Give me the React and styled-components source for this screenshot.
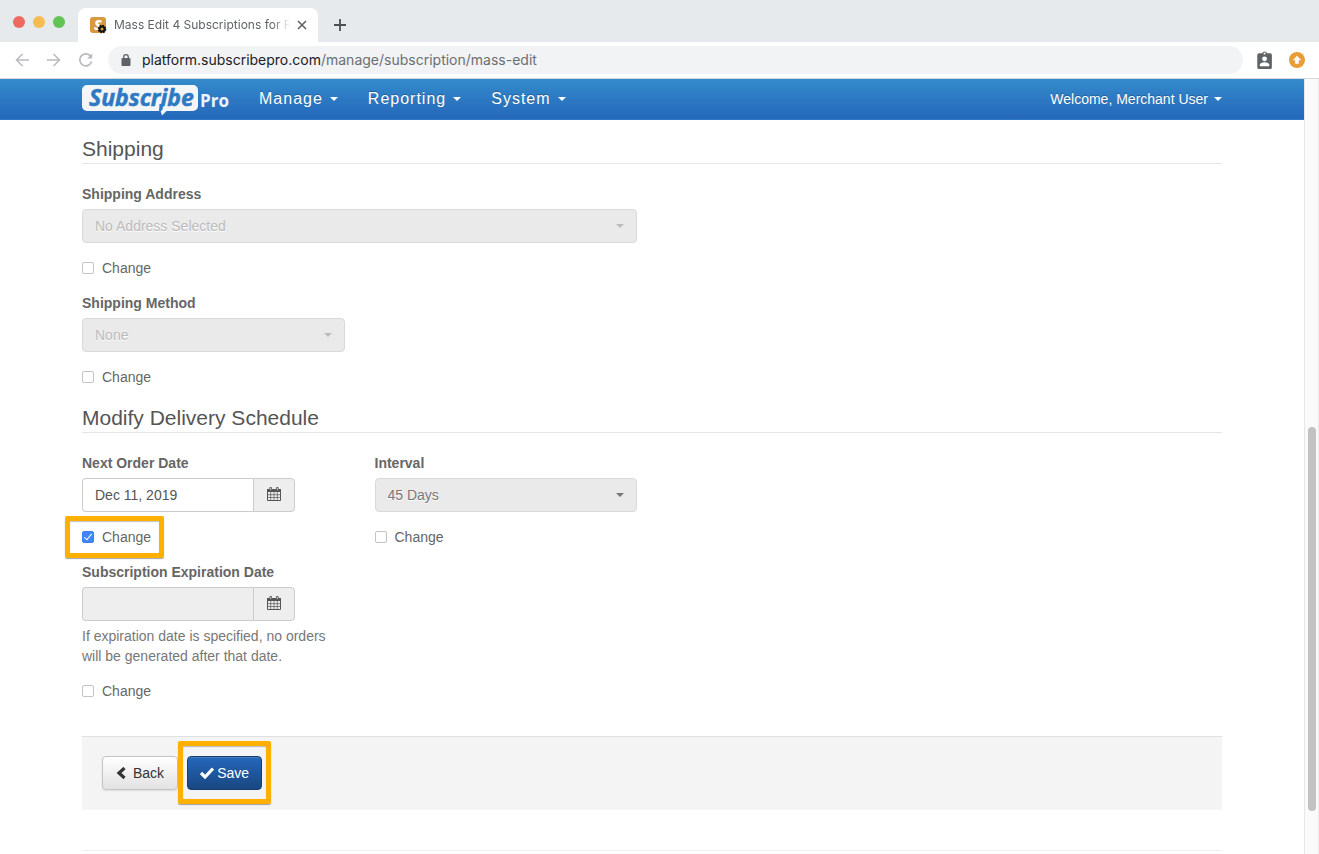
import React, { useState } from 'react';
import styled, { createGlobalStyle, css } from 'styled-components';

const GlobalStyle = createGlobalStyle`
  *, *::before, *::after {
    box-sizing: border-box;
  }

  body {
    margin: 0;
    background: #fff;
    color: #555;
    font: 14px/20px "Liberation Sans", Arial, sans-serif;
  }

  button, input, select {
    font: inherit;
    color: inherit;
  }
`;

function BrowserBar() {
  return (
    <header>
      <TabStrip>
        <Lights>
          <Light color="#ee6a5f" />
          <Light color="#f5bd4f" />
          <Light color="#61c454" />
        </Lights>
        <Tab>
          <Favicon />
          <TabTitle>Mass Edit 4 Subscriptions for R</TabTitle>
          <IconButton aria-label="Close tab" $size={10}>
            <svg width="10" height="10" viewBox="0 0 10 10" stroke="#5f6368" strokeWidth="1.6">
              <path d="M1 1l8 8M9 1l-8 8" />
            </svg>
          </IconButton>
        </Tab>
        <IconButton aria-label="New tab" $size={12}>
          <svg width="12" height="12" viewBox="0 0 12 12" stroke="#4d5156" strokeWidth="1.8">
            <path d="M6 0v12M0 6h12" />
          </svg>
        </IconButton>
      </TabStrip>
      <Toolbar>
        <NavIcons>
          <IconButton aria-label="Back" $size={14}>
            <svg width="14" height="14" viewBox="0 0 14 14" fill="none" stroke="#b9bbbe" strokeWidth="1.6">
              <path d="M14 7H1.5M7.5 1L1.5 7l6 6" />
            </svg>
          </IconButton>
          <IconButton aria-label="Forward" $size={14}>
            <svg width="14" height="14" viewBox="0 0 14 14" fill="none" stroke="#b9bbbe" strokeWidth="1.6">
              <path d="M0 7h12.5M6.5 1l6 6-6 6" />
            </svg>
          </IconButton>
          <IconButton aria-label="Reload" $size={14}>
            <svg width="14" height="14" viewBox="0 0 14 14" fill="none" stroke="#b9bbbe" strokeWidth="1.7">
              <path d="M12.6 8.6A6 6 0 1 1 11.4 2.9L12.4 4" />
              <path d="M13.2 0.4v5.2H8z" fill="#b9bbbe" stroke="none" />
            </svg>
          </IconButton>
        </NavIcons>
        <Address>
          <svg width="10" height="12" viewBox="0 0 10 12">
            <rect x="0.5" y="4" width="9" height="8" rx="1" fill="#5f6368" />
            <path d="M2.7 4.5V3a2.3 2.3 0 0 1 4.6 0v1.5" fill="none" stroke="#5f6368" strokeWidth="1.3" />
          </svg>
          <span>platform.subscribepro.com<Path>/manage/subscription/mass-edit</Path></span>
        </Address>
        <IconButton aria-label="Profile extension" $size={18}>
          <svg width="18" height="18" viewBox="0 0 19 19">
            <path d="M2 2.5h3.4a2.7 2.7 0 0 1 5.2 0H14a1.7 1.7 0 0 1 1.7 1.7v13A1.7 1.7 0 0 1 14 19H2A1.7 1.7 0 0 1 .3 17.2v-13A1.7 1.7 0 0 1 2 2.500z" fill="#5f6368" />
            <circle cx="8" cy="2.600" r="1.100" fill="#fff" />
            <circle cx="8" cy="8.300" r="2.600" fill="#fff" />
            <path d="M3 16v-1.300c0-1.800 3-2.700 5-2.700s5 .9 5 2.700V16z" fill="#fff" />
          </svg>
        </IconButton>
        <IconButton aria-label="Update" $size={16}>
          <svg width="16" height="16" viewBox="0 0 16 16">
            <circle cx="8" cy="8" r="8" fill="#e99d36" />
            <path d="M8 3.700l4.300 4.600H9.800v3.500H6.200V8.300H3.700z" fill="#fff" />
          </svg>
        </IconButton>
      </Toolbar>
    </header>
  );
}

function Favicon() {
  return (
    <svg width="17" height="17" viewBox="0 0 17 17" overflow="visible">
      <rect width="16" height="16" rx="3" fill="#d9993f" />
      <text x="4" y="13" fontFamily="Open Sans" fontWeight="800" fontStyle="italic" fontSize="14" fill="#fff">S</text>
      <circle cx="12" cy="12" r="2.500" fill="none" stroke="#111" strokeWidth="2" />
      <circle cx="12" cy="12" r="3.700" fill="none" stroke="#111" strokeWidth="1.300" strokeDasharray="1.600 1.306" />
    </svg>
  );
}

function Logo() {
  return (
    <svg width="147" height="32" viewBox="0 0 147 32" overflow="visible" role="img" aria-label="Subscribe Pro">
      <path d="M5 2h106a5 5 0 0 1 5 5v16a5 5 0 0 1-5 5H84.500l-4.500 4.500-1.500-4.500H5a5 5 0 0 1-5-5V7a5 5 0 0 1 5-5z" fill="#f4f5f7" />
      <text x="7" y="23" fontFamily="Open Sans" fontWeight="700" fontStyle="italic" fontSize="23" fill="#2f79c4" stroke="#2f79c4" strokeWidth=".5">Subscribe</text>
      <path d="M77.500 21h4.200l-1.200 5.500-3.500 3.500 0-2z" fill="#2f79c4" />
      <text x="118" y="24" fontFamily="Open Sans" fontWeight="700" fontSize="17" fill="#edf3fa">Pro</text>
    </svg>
  );
}

function SelectField({ id, label, value, span, muted }) {
  return (
    <Field $span={span}>
      <Label htmlFor={id}>{label}</Label>
      <SelectBox $muted={muted}>
        <select id={id} disabled>
          <option>{value}</option>
        </select>
        <Caret />
      </SelectBox>
      <ChangeBox name={id} />
    </Field>
  );
}

function DateField({ id, label, value, help, checked, highlighted }) {
  const [enabled, setEnabled] = useState(Boolean(checked));

  return (
    <Field>
      <Label htmlFor={id}>{label}</Label>
      <DateGroup>
        <input id={id} type="text" defaultValue={value} disabled={!enabled} />
        <button type="button" aria-label={`Pick ${label}`}>
          <CalendarIcon />
        </button>
      </DateGroup>
      {help && <Help>{help}</Help>}
      <ChangeBox
        name={id}
        checked={enabled}
        onChange={() => {setEnabled(!enabled)}}
        highlighted={highlighted}
      />
    </Field>
  );
}

function ChangeBox({ name, highlighted, ...rest }) {
  return (
    <CheckLabel>
      <input type="checkbox" name={`${name}-change`} {...rest} />
      Change
      {highlighted && <Highlight $y={11} $x={17} $right={13} />}
    </CheckLabel>
  );
}

function CalendarIcon() {
  return (
    <svg width="14" height="14" viewBox="0 0 14 14" fill="none" stroke="#555">
      <path d="M.5 4.500v9h13v-9" />
      <path d="M0 2h14v3H0z" fill="#555" stroke="none" />
      <path d="M3.700 5v8M7 5v8M10.300 5v8M1 7.700h12M1 10.500h12" strokeWidth=".7" />
      <path d="M3.700 1.300v1.700M10.300 1.300v1.700" strokeWidth="2.600" strokeLinecap="round" />
      <path d="M3.700 1v2.200M10.300 1v2.200" stroke="#ddd" strokeWidth=".9" />
    </svg>
  );
}

function App() {
  return (
    <Window>
      <GlobalStyle />
      <BrowserBar />
      <Viewport>
        <Page>
          <Navbar>
            <Container as="nav">
              <Logo />
              <Menu>
                <MenuLink href="#manage">Manage<Caret /></MenuLink>
                <MenuLink href="#reporting">Reporting<Caret /></MenuLink>
                <MenuLink href="#system">System<Caret /></MenuLink>
              </Menu>
              <UserLink href="#user">Welcome, Merchant User<Caret /></UserLink>
            </Container>
          </Navbar>
          <Content>
            <Heading>Shipping</Heading>
            <Row>
              <SelectField id="address" label="Shipping Address" value="No Address Selected" span={2} muted />
            </Row>
            <Row>
              <SelectField id="method" label="Shipping Method" value="None" muted />
            </Row>
            <Heading>Modify Delivery Schedule</Heading>
            <Row>
              <DateField id="next-order" label="Next Order Date" value="Dec 11, 2019" checked highlighted />
              <SelectField id="interval" label="Interval" value="45 Days" />
            </Row>
            <Row>
              <DateField
                id="expiration"
                label="Subscription Expiration Date"
                help="If expiration date is specified, no orders will be generated after that date."
              />
            </Row>
            <Actions>
              <Button type="button">
                <svg width="10" height="12" viewBox="0 0 10 12" fill="none" stroke="#333" strokeWidth="3.200">
                  <path d="M8.500 1L3 6l5.500 5" />
                </svg>
                Back
              </Button>
              <SaveSlot>
                <Button type="submit" $primary>
                  <svg width="14" height="12" viewBox="0 0 14 12" fill="none" stroke="#fff" strokeWidth="3.200">
                    <path d="M1 6l4 4L13 1.500" />
                  </svg>
                  Save
                </Button>
                <Highlight $y={15} $bottom={14} $x={9} $right={9} />
              </SaveSlot>
            </Actions>
            <Divider />
          </Content>
        </Page>
        <Scrollbar>
          <Thumb />
        </Scrollbar>
      </Viewport>
    </Window>
  );
}

const Window = styled.div`
  display: flex;
  flex-direction: column;
  min-height: 100vh;
`;

const TabStrip = styled.div`
  display: flex;
  align-items: center;
  height: 42px;
  padding: 8px 15px 0 12px;
  background: #e7eaed;
`;

const Lights = styled.div`
  display: flex;
  gap: 8px;
  width: 66px;
  padding: 0 0 7px 1px;
`;

const Light = styled.span`
  width: 12px;
  height: 12px;
  border-radius: 50%;
  background: ${props => props.color};
`;

const Tab = styled.div`
  display: flex;
  align-items: center;
  gap: 7px;
  width: 240px;
  height: 34px;
  padding: 0 11px 0 12px;
  margin-right: 16px;
  border-radius: 8px 8px 0 0;
  background: #fff;
`;

const TabTitle = styled.span`
  flex: 1;
  overflow: hidden;
  white-space: nowrap;
  font: 12px/20px Inter, sans-serif;
  color: #5f6368;
  mask-image: linear-gradient(to right, #000 90%, transparent);
`;

const IconButton = styled.button`
  display: grid;
  place-items: center;
  flex: none;
  width: ${props => props.$size}px;
  height: ${props => props.$size}px;
  padding: 0;
  border: none;
  background: transparent;
  cursor: pointer;
`;

const Toolbar = styled.div`
  display: flex;
  align-items: center;
  gap: 14px;
  height: 37px;
  padding: 0 14px 0 15px;
  border-bottom: 1px solid #d5d7da;
  background: #fff;
`;

const NavIcons = styled.div`
  display: flex;
  gap: 18px;
  width: 79px;
`;

const Address = styled.div`
  flex: 1;
  display: flex;
  align-items: center;
  gap: 11px;
  height: 28px;
  padding: 0 13px;
  border-radius: 14px;
  background: #f1f3f4;
  font: 14px/20px Inter, sans-serif;
  color: #202124;
`;

const Path = styled.span`
  color: #6b6f73;
`;

const Viewport = styled.div`
  flex: 1;
  display: flex;
`;

const Page = styled.div`
  flex: 1;
`;

const Scrollbar = styled.div`
  display: grid;
  grid-template-rows: 348fr 384fr 43fr;
  width: 15px;
  padding: 0 2px 0 3px;
  border-left: 1px solid #e6e6e6;
  border-right: 1px solid #ececec;
  background: #fafafa;
`;

const Thumb = styled.div`
  grid-row: 2;
  width: 8px;
  border-radius: 4px;
  background: #c2c2c2;
`;

const Navbar = styled.div`
  height: 41px;
  border-bottom: 1px solid #2a7ac6;
  background: linear-gradient(#348bcb, #2567bb);
`;

const Container = styled.div`
  display: flex;
  align-items: center;
  max-width: 1140px;
  height: 40px;
  margin: 0 auto;
`;

const Menu = styled.div`
  display: flex;
  gap: 30px;
  flex: 1;
  margin-left: 30px;
`;

const Caret = styled.span`
  border: 4px solid transparent;
  border-top-color: currentColor;
  border-bottom: none;
`;

const UserLink = styled.a`
  display: flex;
  align-items: center;
  gap: 6px;
  color: #fff;
  text-decoration: none;
  text-shadow: 0 -1px 0 rgba(0, 0, 0, .25);
`;

const MenuLink = styled(UserLink)`
  gap: 7px;
  font-size: 16px;
  letter-spacing: 1px;
`;

const Content = styled.main`
  max-width: 1140px;
  margin: 0 auto;
  padding-top: 13px;
`;

const Heading = styled.h2`
  margin: 0 0 20px;
  padding-top: 2px;
  border-bottom: 1px solid #e5e5e5;
  font-size: 21px;
  line-height: 28px;
  font-weight: 400;
  color: #555;
`;

const Row = styled.div`
  display: grid;
  grid-template-columns: repeat(4, 1fr);
  gap: 30px;
`;

const Field = styled.div`
  grid-column: span ${props => props.$span || 1};
  padding-bottom: 15px;
`;

const Label = styled.label`
  display: block;
  margin-bottom: 5px;
  font-weight: 700;
  color: #666;
`;

const SelectBox = styled.div`
  display: grid;
  align-items: center;
  color: ${props => props.$muted ? '#bbb' : '#777'};

  select, ${Caret} {
    grid-area: 1 / 1;
  }

  select {
    width: 100%;
    height: 34px;
    padding: 0 12px;
    border: 1px solid #d9d9d9;
    border-radius: 4px;
    appearance: none;
    background: #eaeaea;
    opacity: 1;
    text-shadow: 0 1px 0 #fff;
  }

  ${Caret} {
    justify-self: end;
    margin-right: 13px;
  }
`;

const DateGroup = styled.div`
  display: flex;
  width: 213px;
  height: 34px;

  input {
    width: 171px;
    padding: 0 12px;
    border: 1px solid #ccc;
    border-right: none;
    border-radius: 4px 0 0 4px;
    background: #fff;

    &:disabled {
      background: #eee;
    }
  }

  button {
    flex: 1;
    display: grid;
    place-items: center;
    padding: 0 0 2px;
    border: 1px solid #ccc;
    border-radius: 0 4px 4px 0;
    background: #eee;
  }
`;

const Help = styled.p`
  margin: 5px 0 0;
  color: #777;
`;

const CheckLabel = styled.label`
  position: relative;
  display: flex;
  align-items: center;
  gap: 8px;
  width: max-content;
  margin-top: 15px;
  color: #666;

  input {
    display: grid;
    place-items: center;
    width: 12px;
    height: 12px;
    margin: 0;
    border: 1px solid #c4c4c4;
    border-radius: 2px;
    appearance: none;
    background: #fff;
  }

  input:checked {
    border-color: #3b82f0;
    background: #3f87f7;
  }

  input:checked::before {
    content: "";
    width: 4px;
    height: 8px;
    margin-bottom: 2px;
    border: solid #fff;
    border-width: 0 1px 1px 0;
    transform: rotate(40deg);
  }
`;

const Highlight = styled.span`
  position: absolute;
  top: -${props => props.$y}px;
  right: -${props => props.$right}px;
  bottom: -${props => props.$bottom || props.$y}px;
  left: -${props => props.$x}px;
  border: 5px solid #ffb000;
  border-radius: 2px;
  box-shadow: 0 1px 1px rgba(0, 0, 0, .35), inset 0 1px 1px rgba(0, 0, 0, .25);
  pointer-events: none;
`;

const Actions = styled.div`
  display: flex;
  gap: 9px;
  margin: 20px 0 40px;
  padding: 19px 20px 20px;
  border-top: 1px solid #e0e0e0;
  background: #f4f4f4;
`;

const SaveSlot = styled.div`
  position: relative;
`;

const Button = styled.button`
  display: flex;
  align-items: center;
  gap: 7px;
  height: 34px;
  padding: 0 13px;
  border: 1px solid #c4c4c4;
  border-radius: 4px;
  background: linear-gradient(#fff, #e2e2e2);
  box-shadow: 0 1px 2px rgba(0, 0, 0, .1);
  color: #333;
  cursor: pointer;

  ${props => props.$primary && css`
    gap: 3px;
    padding: 0 12px;
    border-color: #153f73;
    background: linear-gradient(#2567bb, #194781);
    box-shadow: inset 0 1px 0 rgba(255, 255, 255, .15);
    color: #fff;
  `}
`;

const Divider = styled.hr`
  margin: 0;
  border: none;
  border-top: 1px solid #eee;
`;

export default App;
